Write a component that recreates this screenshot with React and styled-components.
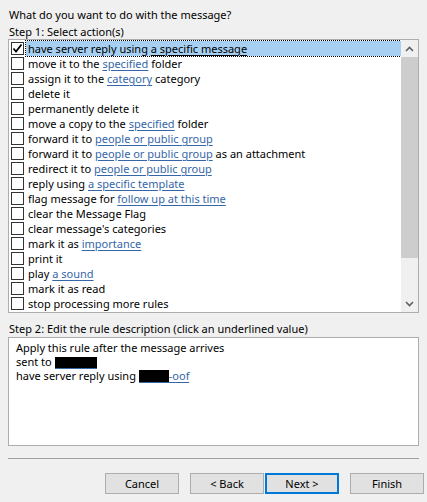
import styled, { createGlobalStyle } from 'styled-components';

const GlobalStyle = createGlobalStyle`
  html, body {
    margin: 0;
    padding: 0;
    background: #f0f0f0;
  }
  body {
    font-family: "Noto Sans", "Open Sans", sans-serif;
    font-size: 11px;
    color: #000;
  }
`;

const actions = [
  ['have server reply using ', { link: 'a specific message', dark: true }],
  ['move it to the ', { link: 'specified' }, ' folder'],
  ['assign it to the ', { link: 'category' }, ' category'],
  ['delete it'],
  ['permanently delete it'],
  ['move a copy to the ', { link: 'specified' }, ' folder'],
  ['forward it to ', { link: 'people or public group' }],
  ['forward it to ', { link: 'people or public group' }, ' as an attachment'],
  ['redirect it to ', { link: 'people or public group' }],
  ['reply using ', { link: 'a specific template' }],
  ['flag message for ', { link: 'follow up at this time' }],
  ['clear the Message Flag'],
  ["clear message's categories"],
  ['mark it as ', { link: 'importance' }],
  ['print it'],
  ['play ', { link: 'a sound' }],
  ['mark it as read'],
  ['stop processing more rules'],
];

export default function App() {
  return (
    <>
      <GlobalStyle />
      <S.Dialog>
        <S.Label $top={7}>What do you want to do with the message?</S.Label>
        <S.Label $top={2}>Step 1: Select action(s)</S.Label>

        <S.ListBox>
          <S.Rows>
            {actions.map((parts, i) => (
              <S.Row key={i}>
                <S.Check>
                  {i === 0 && (
                    <svg width="11" height="11" viewBox="0 0 11 11">
                      <path d="M1.5 5.5 L4 8.5 L9.5 1.5" fill="none" stroke="#000" strokeWidth="1.8" />
                    </svg>
                  )}
                </S.Check>
                <S.RowText $selected={i === 0}>
                  {parts.map((p, j) =>
                    typeof p === 'string' ? (
                      <span key={j}>{p}</span>
                    ) : (
                      <S.Link key={j} $dark={p.dark}>
                        {p.link}
                      </S.Link>
                    )
                  )}
                </S.RowText>
              </S.Row>
            ))}
          </S.Rows>
          <S.ScrollBar>
            <S.Arrow>
              <svg width="9" height="6" viewBox="0 0 9 6">
                <path d="M1 5 L4.5 1.5 L8 5" fill="none" stroke="#606060" strokeWidth="1.6" />
              </svg>
            </S.Arrow>
            <S.Track>
              <S.Thumb />
            </S.Track>
            <S.Arrow>
              <svg width="9" height="6" viewBox="0 0 9 6">
                <path d="M1 1 L4.5 4.5 L8 1" fill="none" stroke="#606060" strokeWidth="1.6" />
              </svg>
            </S.Arrow>
          </S.ScrollBar>
        </S.ListBox>

        <S.Label $top={8}>Step 2: Edit the rule description (click an underlined value)</S.Label>

        <S.DescBox>
          <S.DescLine>Apply this rule after the message arrives</S.DescLine>
          <S.DescLine>
            sent to{' '}
            <S.BoxLink>
              <S.Redact $w={42} $h={11} />
            </S.BoxLink>
          </S.DescLine>
          <S.DescLine>
            have server reply using{' '}
            <S.BoxLink>
              <S.Redact $w={30} $h={12} />
              -oof
            </S.BoxLink>
          </S.DescLine>
        </S.DescBox>

        <S.Separator />

        <S.Buttons>
          <S.Button>Cancel</S.Button>
          <S.ButtonPair>
            <S.Button>&lt; Back</S.Button>
            <S.Button $primary>Next &gt;</S.Button>
          </S.ButtonPair>
          <S.Button>Finish</S.Button>
        </S.Buttons>
      </S.Dialog>
    </>
  );
}

const Dialog = styled.div`
  width: 427px;
  height: 502px;
  box-sizing: border-box;
  padding: 0 8px;
  display: flex;
  flex-direction: column;
`;

const Label = styled.div`
  margin-top: ${(p) => p.$top}px;
  line-height: 15px;
  padding-left: 1px;
  white-space: nowrap;
`;

const ListBox = styled.div`
  height: 274px;
  box-sizing: border-box;
  border: 1px solid #adadad;
  background: #fff;
  display: flex;
`;

const Rows = styled.div`
  flex: 1;
  padding-top: 1px;
  overflow: hidden;
`;

const Row = styled.div`
  height: 15px;
  display: flex;
  align-items: center;
  padding-left: 2px;
`;

const Check = styled.span`
  width: 11px;
  height: 11px;
  border: 1px solid #333;
  background: #fff;
  display: flex;
  align-items: center;
  justify-content: center;
  flex-shrink: 0;
  margin-right: 2px;
`;

const RowText = styled.div`
  flex: 1;
  height: 15px;
  line-height: 15px;
  padding-left: 2px;
  box-sizing: border-box;
  white-space: nowrap;
  background: ${(p) => (p.$selected ? '#a6cff1' : 'transparent')};
  outline: ${(p) => (p.$selected ? '1px dotted #000' : 'none')};
  outline-offset: 0;
`;

const Link = styled.span`
  color: ${(p) => (p.$dark ? '#000' : '#3566a8')};
  text-decoration: underline;
  text-underline-offset: 2px;
`;

const ScrollBar = styled.div`
  width: 17px;
  display: flex;
  flex-direction: column;
  background: #f0f0f0;
`;

const Arrow = styled.div`
  height: 17px;
  display: flex;
  align-items: center;
  justify-content: center;
`;

const Track = styled.div`
  flex: 1;
`;

const Thumb = styled.div`
  height: 201px;
  background: #cdcdcd;
`;

const DescBox = styled.div`
  margin-top: 1px;
  height: 109px;
  box-sizing: border-box;
  border: 1px solid #adadad;
  background: #fff;
  padding: 3px 7px;
`;

const DescLine = styled.div`
  line-height: 14px;
  white-space: nowrap;
`;

const BoxLink = styled.span`
  display: inline-block;
  color: #3566a8;
  border-bottom: 1px solid #3566a8;
  line-height: 12px;
`;

const Redact = styled.span`
  display: inline-block;
  width: ${(p) => p.$w}px;
  height: ${(p) => p.$h}px;
  background: #000;
  vertical-align: bottom;
`;

const Separator = styled.div`
  margin-top: 12px;
  height: 1px;
  background: #a0a0a0;
`;

const Buttons = styled.div`
  margin-top: 14px;
  margin-right: -5px;
  display: flex;
  justify-content: flex-end;
  gap: 11px;
`;

const ButtonPair = styled.div`
  display: flex;
  gap: 1px;
`;

const Button = styled.button`
  width: 74px;
  height: 21px;
  box-sizing: border-box;
  padding: 0;
  font-family: inherit;
  font-size: 11px;
  color: #000;
  background: #e1e1e1;
  border: ${(p) => (p.$primary ? '2px solid #0078d7' : '1px solid #adadad')};
`;

const S = {
  Dialog,
  Label,
  ListBox,
  Rows,
  Row,
  Check,
  RowText,
  Link,
  ScrollBar,
  Arrow,
  Track,
  Thumb,
  DescBox,
  DescLine,
  BoxLink,
  Redact,
  Separator,
  Buttons,
  ButtonPair,
  Button,
};
